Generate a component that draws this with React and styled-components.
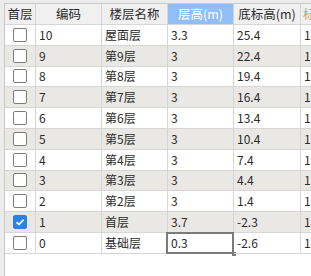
import styled, { createGlobalStyle } from "styled-components";

const GlobalStyle = createGlobalStyle`
    html, body {
        margin: 0;
        padding: 0;
        background: #ececec;
    }
    #root {
        height: 276px;
    }
`;

const floors = [
    { code: "10", name: "屋面层", height: "3.3", base: "25.4", first: false },
    { code: "9", name: "第9层", height: "3", base: "22.4", first: false },
    { code: "8", name: "第8层", height: "3", base: "19.4", first: false },
    { code: "7", name: "第7层", height: "3", base: "16.4", first: false },
    { code: "6", name: "第6层", height: "3", base: "13.4", first: false },
    { code: "5", name: "第5层", height: "3", base: "10.4", first: false },
    { code: "4", name: "第4层", height: "3", base: "7.4", first: false },
    { code: "3", name: "第3层", height: "3", base: "4.4", first: false },
    { code: "2", name: "第2层", height: "3", base: "1.4", first: false },
    { code: "1", name: "首层", height: "3.7", base: "-2.3", first: true },
    { code: "0", name: "基础层", height: "0.3", base: "-2.6", first: false, editing: true },
];

const Frame = styled.div`
    height: 100%;
    box-sizing: border-box;
    padding: 3px 0 0 4px;
    background: #ececec;
    overflow: hidden;
`;

const Sheet = styled.div`
    height: 100%;
    background: #ffffff;
    border-top: 1px solid #c9c9c9;
    border-left: 1px solid #c9c9c9;
    font-family: "Noto Sans CJK SC", "Microsoft YaHei", sans-serif;
    font-size: 12px;
    color: #2b2b2b;
    overflow: hidden;
`;

const Row = styled.div`
    display: grid;
    grid-template-columns: 31px 66px 66px 66px 67px 80px;
    height: ${(p) => (p.$header ? "21px" : "20.8px")};
    background: ${(p) => (p.$header ? "#f0f0f0" : p.$odd ? "#e9e8e5" : "#ffffff")};
`;

const Cell = styled.div`
    position: relative;
    box-sizing: border-box;
    border-right: 1px solid #d6d6d6;
    border-bottom: 1px solid #d6d6d6;
    padding: 0 3px;
    display: flex;
    align-items: center;
    justify-content: ${(p) => (p.$center ? "center" : "flex-start")};
    white-space: nowrap;
    line-height: 1;
`;

const HeadCell = styled(Cell)`
    justify-content: center;
    padding: 0;
    background: ${(p) => (p.$active ? "#8fbff6" : "transparent")};
    color: ${(p) => (p.$active ? "#ffffff" : "#2b2b2b")};
    font-size: 12.5px;
`;

const LastHead = styled(Cell)`
    padding-left: 2px;
    color: #c9a36a;
`;

const Box = styled.span`
    width: 14px;
    height: 14px;
    box-sizing: border-box;
    border: 1.5px solid ${(p) => (p.$checked ? "#2a82e4" : "#7c7c7c")};
    border-radius: 2px;
    background: ${(p) => (p.$checked ? "#2a82e4" : "#ffffff")};
    display: flex;
    align-items: center;
    justify-content: center;
`;

const EditFrame = styled.div`
    position: absolute;
    left: -2px;
    top: -1px;
    right: -1px;
    bottom: -1px;
    border: 2.5px solid #7b7b7b;
    pointer-events: none;

    &::after {
        content: "";
        position: absolute;
        right: -4px;
        bottom: -4px;
        width: 4px;
        height: 4px;
        background: #7b7b7b;
    }
`;

const Check = ({ checked }) => (
    <Box $checked={checked}>
        {checked && (
            <svg width="10" height="10" viewBox="0 0 10 10">
                <path d="M1.5 5.2 L4 7.6 L8.6 2.6" fill="none" stroke="#ffffff" strokeWidth="1.6" />
            </svg>
        )}
    </Box>
);

const App = () => {
    return (
        <Frame>
            <GlobalStyle />
            <Sheet>
                <Row $header>
                    <HeadCell>首层</HeadCell>
                    <HeadCell>编码</HeadCell>
                    <HeadCell>楼层名称</HeadCell>
                    <HeadCell $active>层高(m)</HeadCell>
                    <HeadCell>底标高(m)</HeadCell>
                    <LastHead>标准层数</LastHead>
                </Row>
                {floors.map((f, i) => (
                    <Row key={f.code} $odd={i % 2 === 1}>
                        <Cell $center>
                            <Check checked={f.first} />
                        </Cell>
                        <Cell>{f.code}</Cell>
                        <Cell>{f.name}</Cell>
                        <Cell>
                            {f.height}
                            {f.editing && <EditFrame />}
                        </Cell>
                        <Cell>{f.base}</Cell>
                        <Cell>1</Cell>
                    </Row>
                ))}
            </Sheet>
        </Frame>
    );
};

export default App;
